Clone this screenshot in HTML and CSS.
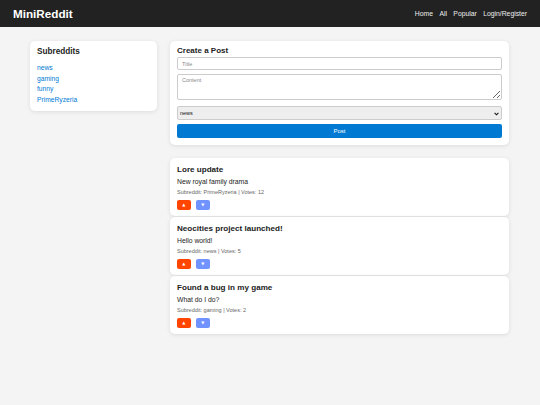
FILE: index.html
```html
<!DOCTYPE html>
<html>
<head>
<meta charset="utf-8">
<link rel="stylesheet" href="styles.css">
</head>
<body>
<header class="topbar">
  <div class="logo">MiniReddit</div>
  <nav class="nav">
    <a href="#">Home</a>
    <a href="#">All</a>
    <a href="#">Popular</a>
    <a href="#">Login/Register</a>
  </nav>
</header>
<div class="layout">
  <aside class="card sidebar">
    <h2 class="side-title">Subreddits</h2>
    <ul class="sublist">
      <li><a href="#">news</a></li>
      <li><a href="#">gaming</a></li>
      <li><a href="#">funny</a></li>
      <li><a href="#">PrimeRyzeria</a></li>
    </ul>
  </aside>
  <main class="main">
    <section class="card create">
      <h2 class="create-title">Create a Post</h2>
      <input class="field title-field" type="text" placeholder="Title">
      <textarea class="field content-field" placeholder="Content"></textarea>
      <div class="select-wrap">
        <select class="field select-field"><option>news</option></select>
        <svg class="chev" width="5" height="4" viewBox="0 0 5 4"><path d="M0.6 0.8 L2.5 2.8 L4.4 0.8" fill="none" stroke="#111" stroke-width="1.1"/></svg>
      </div>
      <button class="post-btn">Post</button>
    </section>
    <div class="posts">
      <article class="card post">
        <h3 class="post-title">Lore update</h3>
        <p class="post-body">New royal family drama</p>
        <p class="post-meta">Subreddit: PrimeRyzeria | Votes: 12</p>
        <div class="votes"><button class="vote up">▲</button><button class="vote down">▼</button></div>
      </article>
      <article class="card post">
        <h3 class="post-title">Neocities project launched!</h3>
        <p class="post-body">Hello world!</p>
        <p class="post-meta">Subreddit: news | Votes: 5</p>
        <div class="votes"><button class="vote up">▲</button><button class="vote down">▼</button></div>
      </article>
      <article class="card post">
        <h3 class="post-title">Found a bug in my game</h3>
        <p class="post-body">What do I do?</p>
        <p class="post-meta">Subreddit: gaming | Votes: 2</p>
        <div class="votes"><button class="vote up">▲</button><button class="vote down">▼</button></div>
      </article>
    </div>
  </main>
</div>
</body>
</html>
```
FILE: styles.css
```css
* { box-sizing: border-box; }
html, body { margin: 0; padding: 0; }
body {
  background: #f4f4f4;
  font-family: "Liberation Sans", Arial, sans-serif;
  color: #222;
  width: 540px;
  height: 405px;
  overflow: hidden;
}
.topbar {
  height: 27px;
  background: #222;
  display: flex;
  align-items: center;
  justify-content: space-between;
  padding: 0 13px 0 13px;
}
.logo {
  color: #fff;
  font-weight: bold;
  font-size: 11.7px;
}
.nav { display: flex; gap: 6.4px; }
.nav a {
  color: #eee;
  text-decoration: none;
  font-size: 6.8px;
}
.layout {
  display: flex;
  gap: 13px;
  padding: 14px 31px 0 30px;
  align-items: flex-start;
}
.card {
  background: #fff;
  border-radius: 5px;
  box-shadow: 0 1px 4px rgba(0,0,0,0.1);
}
.sidebar {
  width: 127px;
  padding: 6px 7px 7px 7px;
  height: 70px;
}
.side-title {
  font-size: 8.2px;
  line-height: 10px;
  margin: 0 0 6px 0;
  font-weight: bold;
}
.sublist { list-style: none; margin: 0; padding: 0; }
.sublist li { font-size: 6.7px; line-height: 10.6px; }
.sublist a { color: #0079d3; text-decoration: none; }
.main { width: 339px; }
.create {
  padding: 4px 7px 7px 7px;
  display: flex;
  flex-direction: column;
}
.create-title {
  font-size: 8px;
  margin: 0 0 2px 0;
  font-weight: bold;
  line-height: 9px;
  padding-top: 1px;
}
.field {
  width: 100%;
  font-family: "Liberation Sans", Arial, sans-serif;
  font-size: 5.5px;
  border: 1px solid #ccc;
  border-radius: 2px;
  padding: 2px 4px;
  margin: 0;
  color: #111;
}
.field::placeholder { color: #888; }
.title-field { height: 13px; margin-bottom: 4px; }
.content-field { height: 26px; margin-bottom: 6px; resize: vertical; display: block; }
.select-wrap { position: relative; margin-bottom: 4px; }
.select-field {
  height: 14px;
  background: #eee;
  -webkit-appearance: none;
  appearance: none;
  padding: 0 2px;
  display: block;
}
.chev { position: absolute; right: 3px; top: 5.5px; }
.post-btn {
  height: 14px;
  background: #0079d3;
  color: #fff;
  border: none;
  border-radius: 2px;
  font-family: "Liberation Sans", Arial, sans-serif;
  font-size: 6px;
  padding: 0;
}
.posts {
  margin-top: 13px;
  display: flex;
  flex-direction: column;
  gap: 1px;
}
.post {
  padding: 6px 7px 6px 7px;
  height: 58px;
}
.post-title {
  margin: 0;
  font-size: 8.1px;
  line-height: 11px;
  font-weight: bold;
}
.post-body {
  margin: 2px 0 0 0;
  font-size: 6.8px;
  line-height: 9px;
  color: #222;
}
.post-meta {
  margin: 2px 0 0 0;
  font-size: 5.5px;
  line-height: 8px;
  color: #666;
}
.votes { display: flex; gap: 5.5px; margin-top: 4px; }
.vote {
  width: 13.5px;
  height: 10px;
  border: none;
  border-radius: 2px;
  color: #fff;
  font-size: 4px;
  padding: 0;
  line-height: 10px;
  font-family: "DejaVu Sans", sans-serif;
}
.up { background: #ff4500; }
.down { background: #7193ff; }
```
